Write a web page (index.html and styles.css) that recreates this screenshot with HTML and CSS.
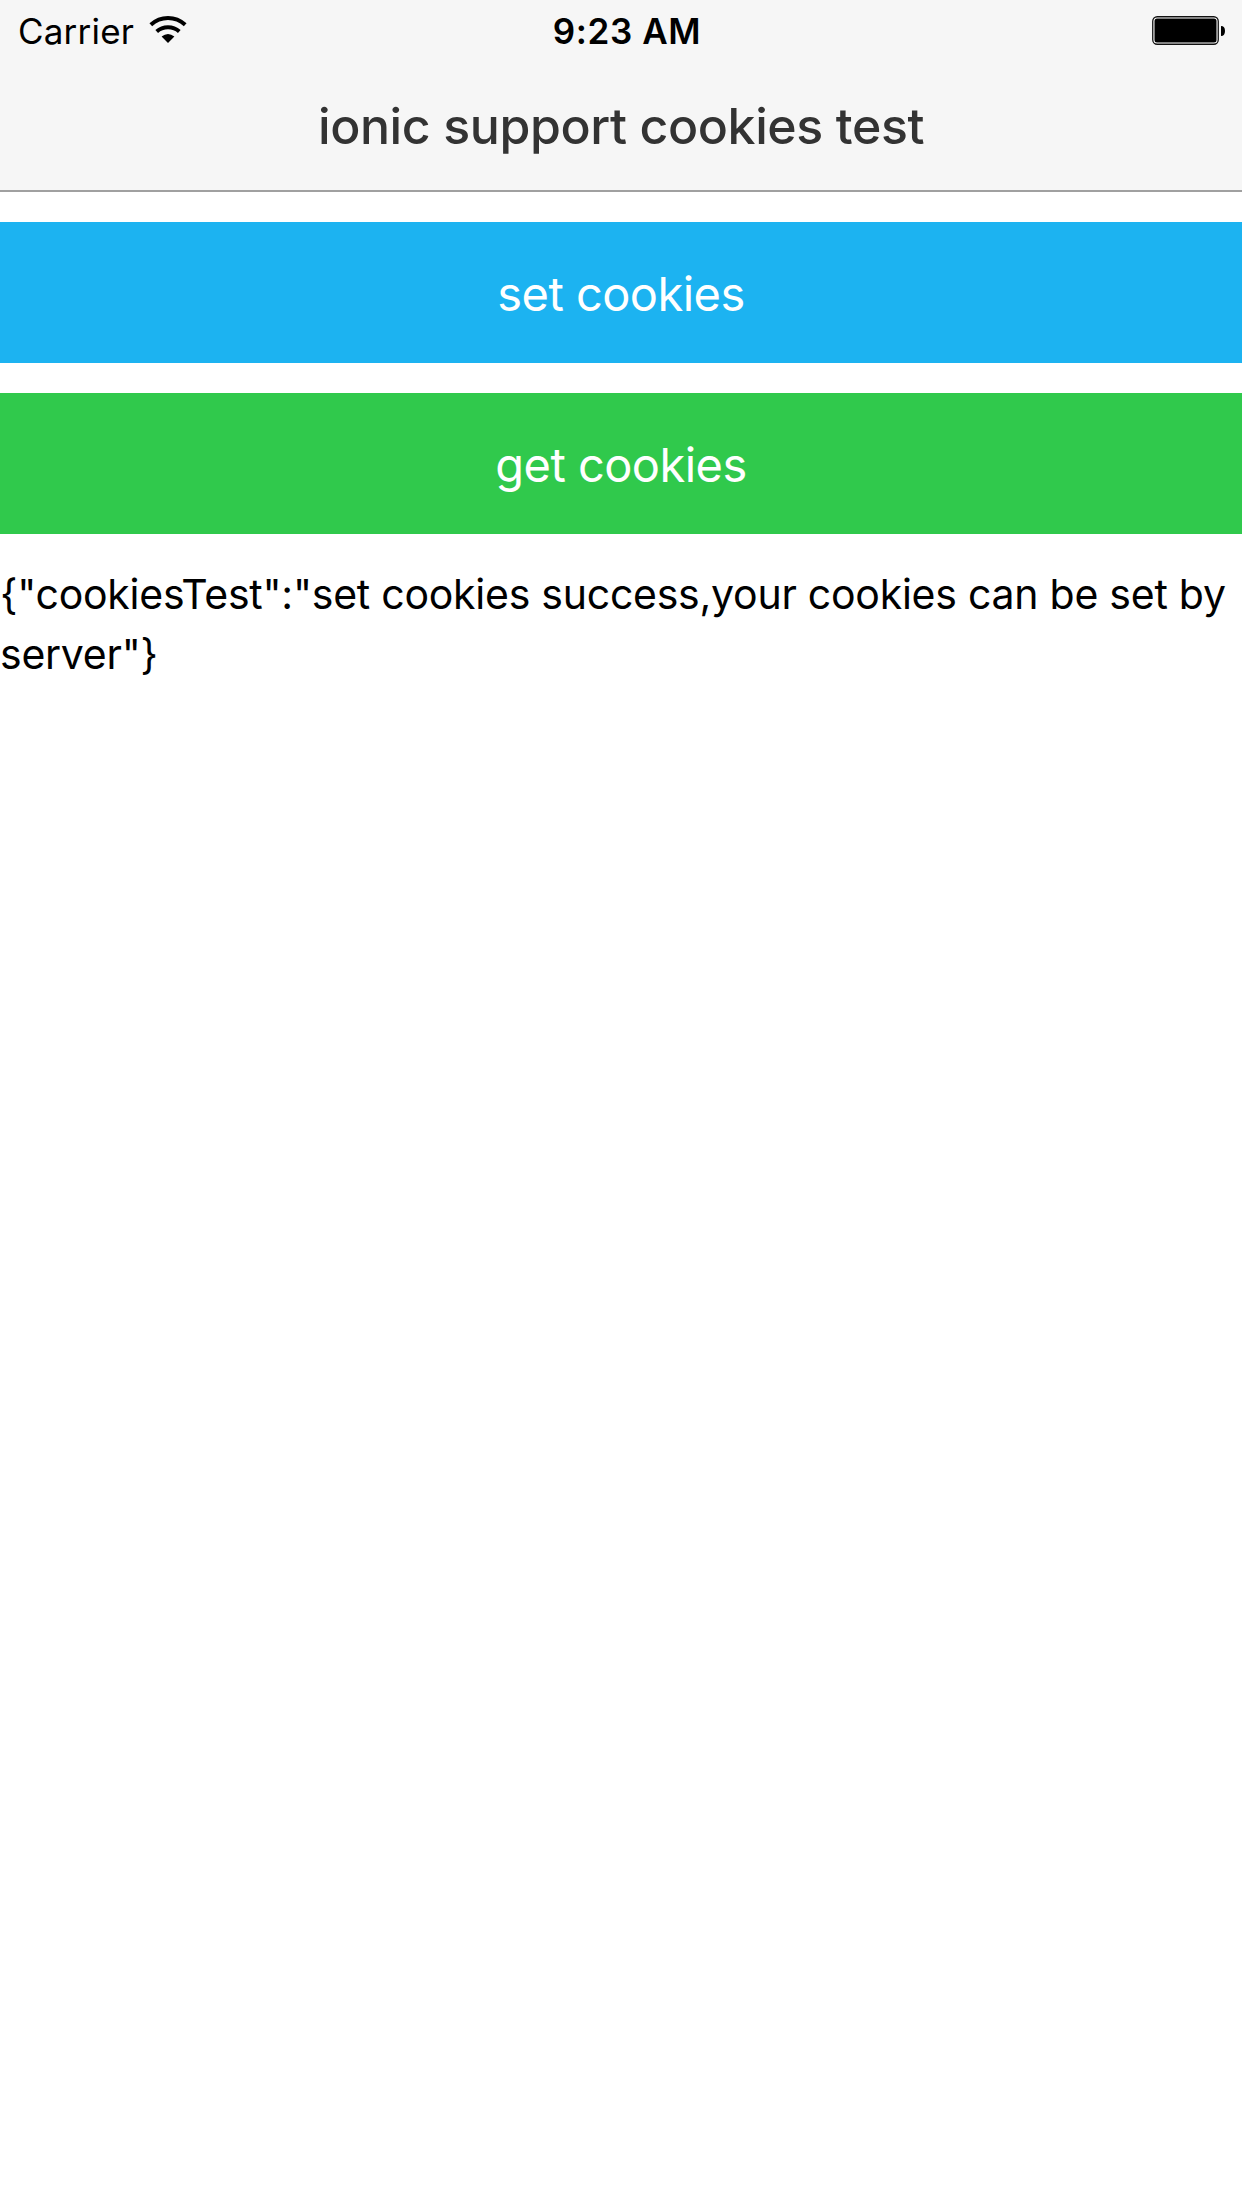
FILE: index.html
```html
<!DOCTYPE html>
<html lang="en">
<head>
<meta charset="utf-8">
<title>ionic support cookies test</title>
<link rel="stylesheet" href="styles.css">
</head>
<body>
<header class="header">
  <div class="status">
    <div class="status-left">
      <span class="carrier">Carrier</span>
      <svg class="wifi" width="38" height="28" viewBox="0 0 38 28" fill="none" stroke="#000" stroke-width="4">
        <path d="M1.8 8.8Q9.2 2 19 2T36.2 8.8"/>
        <path d="M7.700 15.500Q12.400 11.300 19 11.300T30.300 15.500"/>
        <path d="M12.600 20.500Q19 15.500 25.400 20.500L19 27Z" fill="#000" stroke="none"/>
      </svg>
    </div>
    <span class="clock">9:23 AM</span>
    <div class="status-right">
      <svg class="battery" width="74" height="29" viewBox="0 0 74 29">
        <rect x=".75" y=".75" width="65.500" height="27.500" rx="4.500" fill="#fff" stroke="#111" stroke-width="1.300"/>
        <rect x="2.500" y="2.500" width="62" height="24" rx="2.500" fill="#000"/>
        <path d="M69 10q4 0 4 5t-4 5z" fill="#000"/>
      </svg>
    </div>
  </div>
  <h1 class="title">ionic support cookies test</h1>
</header>
<main class="content">
  <button class="button button-set">set cookies</button>
  <button class="button button-get">get cookies</button>
  <p class="result">{"cookiesTest":"set cookies success,your cookies can be set by server"}</p>
</main>
</body>
</html>
```
FILE: styles.css
```css
* { box-sizing: border-box; }
body {
  margin: 0;
  min-height: 100vh;
  background: #fff;
  color: #000;
  font-family: Inter, "Liberation Sans", sans-serif;
}
.header {
  height: 192px;
  background: #f6f6f6;
  border-bottom: 2px solid #a0a0a0;
}
.status {
  display: grid;
  grid-template-columns: 1fr auto 1fr;
  height: 60px;
  padding: 2px 16px 0 18px;
  font-size: 35px;
  line-height: 58px;
}
.status-left { display: flex; gap: 15px; }
.carrier { letter-spacing: 0.2px; }
.wifi { margin-top: 14px; }
.clock { margin-left: 10px; font-weight: 600; letter-spacing: 0.6px; }
.status-right { display: flex; justify-content: flex-end; }
.battery { margin-top: 14px; }
.title {
  margin: 0;
  color: #333;
  font-size: 50px;
  font-weight: 500;
  line-height: 132px;
  letter-spacing: -0.4px;
  text-align: center;
}
.content {
  display: flex;
  flex-direction: column;
  gap: 30px;
  padding-top: 30px;
}
.button {
  height: 141px;
  padding: 3px 0 0;
  border: 0;
  color: #fff;
  font: 47px/138px Inter, "Liberation Sans", sans-serif;
  letter-spacing: -0.55px;
  text-align: center;
}
.button-set { background: #1cb3f1; }
.button-get { background: #30c94c; }
.result {
  margin: 0;
  font-size: 41px;
  line-height: 60px;
  letter-spacing: -0.25px;
}
```
